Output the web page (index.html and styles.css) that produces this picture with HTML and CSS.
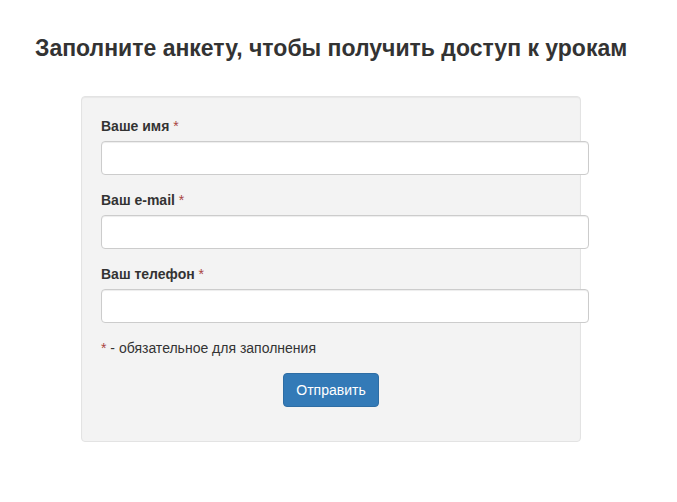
FILE: index.html
```html
<!DOCTYPE html>
<html lang="ru">
<head>
<meta charset="utf-8">
<link rel="stylesheet" href="styles.css">
</head>
<body>
<div class="page">
  <h3 class="title">Заполните анкету, чтобы получить доступ к урокам</h3>
  <form class="well">
    <div class="form-group">
      <label class="label">Ваше имя <span class="req">*</span></label>
      <input class="input" type="text">
    </div>
    <div class="form-group">
      <label class="label">Ваш e-mail <span class="req">*</span></label>
      <input class="input" type="text">
    </div>
    <div class="form-group">
      <label class="label">Ваш телефон <span class="req">*</span></label>
      <input class="input" type="text">
    </div>
    <p class="note"><span class="req">*</span> - обязательное для заполнения</p>
    <div class="actions">
      <button class="btn" type="button">Отправить</button>
    </div>
  </form>
</div>
</body>
</html>
```

FILE: styles.css
```css
html, body {
  margin: 0;
  padding: 0;
  background: #fff;
}
body {
  font-family: "Liberation Sans", Arial, sans-serif;
  font-size: 14px;
  line-height: 20px;
  color: #333;
}
.page {
  padding: 35px 0 0 35px;
}
.title {
  margin: 0;
  font-size: 23px;
  line-height: 26px;
  font-weight: bold;
  color: #333;
}
.well {
  box-sizing: border-box;
  width: 500px;
  margin: 35px 0 0 46px;
  padding: 19px;
  background: #f3f3f3;
  border: 1px solid #e3e3e3;
  border-radius: 4px;
  box-shadow: inset 0 1px 1px rgba(0,0,0,.05);
}
.form-group {
  margin-bottom: 15px;
}
.label {
  display: block;
  font-weight: bold;
  margin-bottom: 5px;
}
.req {
  color: #a94442;
  font-weight: normal;
}
.input {
  display: block;
  box-sizing: border-box;
  width: 488px;
  height: 34px;
  margin: 0;
  padding: 6px 12px;
  font: inherit;
  background: #fff;
  border: 1px solid #ccc;
  border-radius: 4px;
  box-shadow: inset 0 1px 1px rgba(0,0,0,.075);
}
.note {
  margin: 0 0 15px;
}
.actions {
  display: flex;
  justify-content: center;
  margin-bottom: 15px;
}
.btn {
  box-sizing: border-box;
  height: 34px;
  padding: 6px 12px;
  font-family: inherit;
  font-size: 14px;
  line-height: 20px;
  color: #fff;
  background: #337ab7;
  border: 1px solid #2e6da4;
  border-radius: 4px;
}
```
